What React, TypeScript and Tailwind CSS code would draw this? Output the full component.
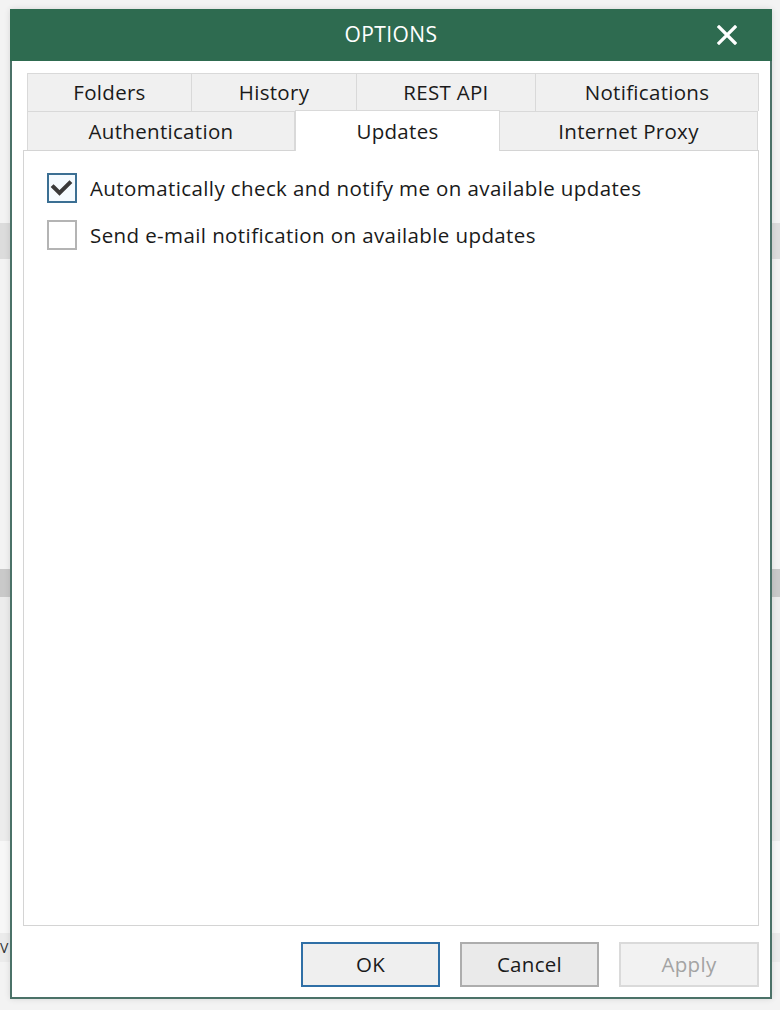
import React from "react";

const font = { fontFamily: '"Open Sans", "Noto Sans", "DejaVu Sans", sans-serif' };

function Tab({ label, w, selected }: { label: string; w: string; selected?: boolean }) {
  return (
    <div
      className={
        selected
          ? `relative z-10 -mt-px -mb-px h-[41px] ${w} flex items-center justify-center border-x border-t border-[#d9d9d9] bg-white text-[20.5px] tracking-[0.3px] text-[#1a1a1a]`
          : `${w} flex items-center justify-center border-t border-r border-[#d9d9d9] bg-[#f0f0f0] text-[20.5px] tracking-[0.3px] text-[#1a1a1a]`
      }
    >
      {label}
    </div>
  );
}

function CheckBox({ checked, label }: { checked?: boolean; label: string }) {
  return (
    <div className="flex items-center gap-[13px]">
      <div
        className={
          checked
            ? "w-[30px] h-[30px] border-2 border-[#3b6f93] bg-[#f5fbff] flex items-center justify-center"
            : "w-[30px] h-[30px] border-2 border-[#b4b4b4] bg-white"
        }
      >
        {checked && (
          <svg width="26" height="26" viewBox="0 0 26 26">
            <polyline
              points="4.5,12 10.5,18 20.5,8"
              fill="none"
              stroke="#3a3a3a"
              strokeWidth="4"
              strokeLinecap="square"
              strokeLinejoin="miter"
            />
          </svg>
        )}
      </div>
      <span className="text-[20.5px] tracking-[0.4px] text-[#1a1a1a] leading-none">{label}</span>
    </div>
  );
}

export default function App() {
  return (
    <div className="relative w-[780px] h-[1010px] bg-[#f3f3f3] overflow-hidden" style={font}>
      {/* background app content peeking around the modal */}
      <div className="flex flex-col w-full h-full">
        <div className="h-[223px]" />
        <div className="h-[36px] bg-[#dcdcdc]" />
        <div className="h-[310px]" />
        <div className="h-[28px] bg-[#c9c9c9]" />
        <div className="h-[244px] bg-[#ececec]" />
        <div className="h-[92px] bg-[#f7f7f7]" />
        <div className="h-[29px] bg-[#ebebeb] flex items-center">
          <span className="text-[14px] leading-none text-[#333] pl-0">V</span>
        </div>
        <div className="flex-1 bg-[#f3f3f3]" />
      </div>

      {/* modal dialog */}
      <div className="absolute left-[10px] top-[9px] w-[762px] h-[990px] flex flex-col bg-white shadow-[0_0_6px_rgba(0,0,0,0.12)]">
        <div className="h-[52px] bg-[#2e6b50] relative flex items-center justify-center">
          <span className="text-white text-[21px] tracking-[0.4px]">OPTIONS</span>
          <svg
            className="absolute left-[707px] top-[16px]"
            width="20"
            height="20"
            viewBox="0 0 20 20"
          >
            <path d="M2 2 L18 18 M18 2 L2 18" stroke="white" strokeWidth="3.2" strokeLinecap="square" />
          </svg>
        </div>
        <div className="flex-1 flex flex-col border-x-2 border-b-2 border-[#4b7268] px-[11px] pt-[12px] pb-[10px]">
          {/* tabs */}
          <div className="flex flex-col pl-[4px] pr-0">
            <div className="flex h-[38px] border-l border-[#d9d9d9]">
              <Tab label="Folders" w="w-[164px]" />
              <Tab label="History" w="w-[165px]" />
              <Tab label="REST API" w="w-[179px]" />
              <Tab label="Notifications" w="w-[223px]" />
            </div>
            <div className="flex h-[39px] border-l border-[#d9d9d9]">
              <Tab label="Authentication" w="w-[267px]" />
              <Tab label="Updates" w="w-[205px]" selected />
              <Tab label="Internet Proxy" w="w-[258px]" />
            </div>
          </div>
          {/* panel */}
          <div className="flex-1 border border-[#d4d4d4] bg-white pl-[23px] pt-[22px] flex flex-col gap-[17px]">
            <CheckBox checked label="Automatically check and notify me on available updates" />
            <CheckBox label="Send e-mail notification on available updates" />
          </div>
          {/* buttons */}
          <div className="mt-[16px] flex justify-end gap-[20px] h-[45px]">
            <button className="w-[139px] h-[45px] border-2 border-[#2f6fa6] bg-[#efefef] text-[20.5px] tracking-[0.3px] text-[#1a1a1a]">
              OK
            </button>
            <button className="w-[139px] h-[45px] border-2 border-[#adadad] bg-[#eaeaea] text-[20.5px] tracking-[0.3px] text-[#1a1a1a]">
              Cancel
            </button>
            <button className="w-[140px] h-[45px] border-2 border-[#dadada] bg-[#f2f2f2] text-[20.5px] tracking-[0.3px] text-[#a3a3a3]">
              Apply
            </button>
          </div>
        </div>
      </div>
    </div>
  );
}
